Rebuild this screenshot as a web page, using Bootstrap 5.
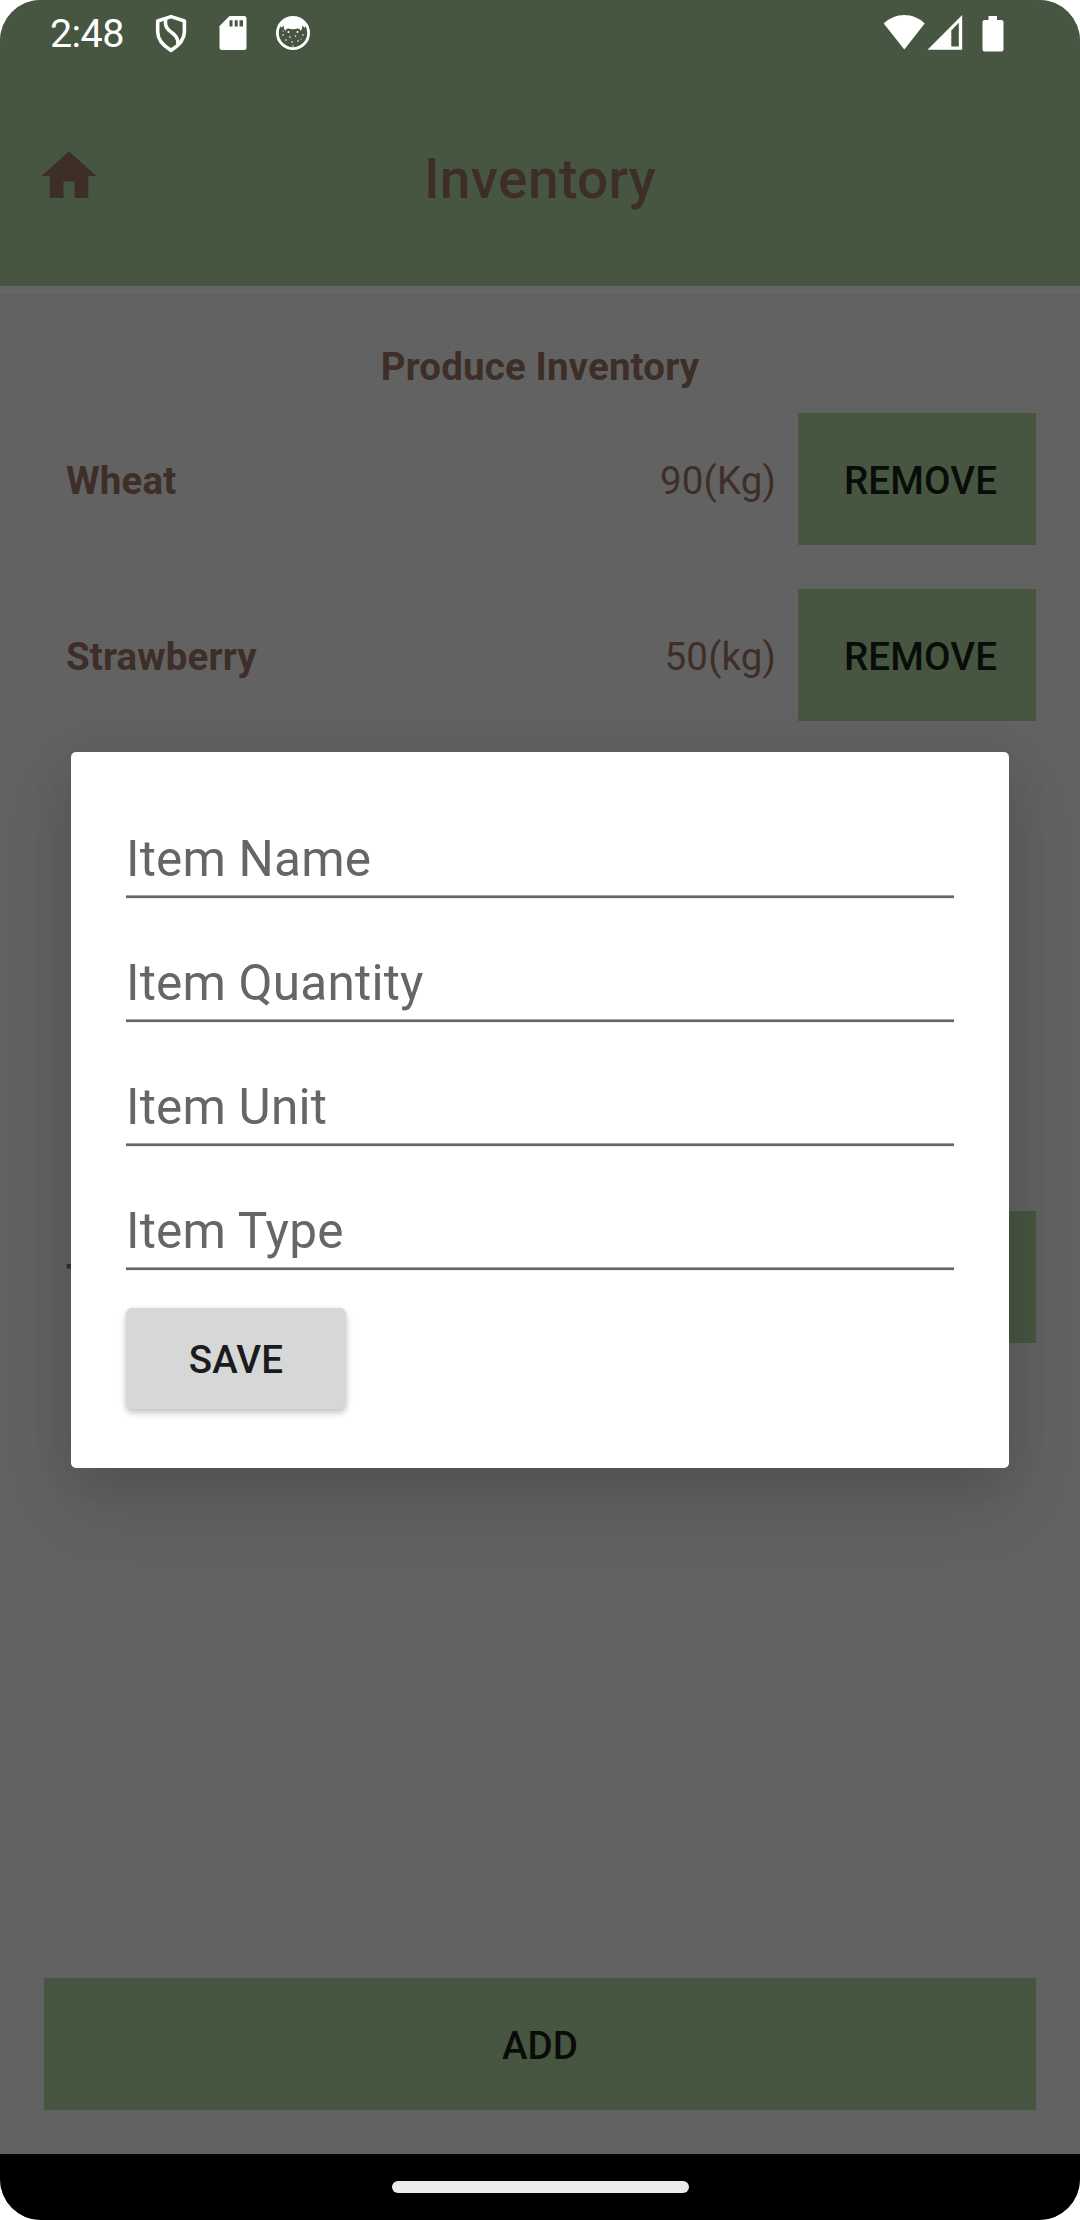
<!DOCTYPE html>
<html lang="en">
<head>
<meta charset="utf-8">
<meta name="viewport" content="width=device-width, initial-scale=1">
<title>Inventory</title>
<link href="https://cdn.jsdelivr.net/npm/bootstrap@5.3.0/dist/css/bootstrap.min.css" rel="stylesheet">
<style>
  body { font-family: Roboto, "Liberation Sans", sans-serif; background: #fff; margin: 0; }
  .phone { width: 1080px; height: 2220px; border-radius: 41px; background: #626262; font-size: 38.5px; line-height: 45px; letter-spacing: .13px; }
  .top-area { height: 286px; background: #475641; }
  .status { height: 66px; padding: 0 76px 0 50px; color: #fff; font-size: 39.5px; letter-spacing: -.6px; }
  .status svg, .home svg { display: block; flex: none; }
  .clock { width: 104px; padding-top: 1px; }
  .ic-card { margin-left: 30.5px; }
  .ic-face { margin-left: 28.8px; }
  .ic-wifi { margin-top: -2px; }
  .ic-cell { margin: -2px 18.8px 0 2.4px; }
  .app-title { color: #3e2e28; font-size: 55px; line-height: 64px; font-weight: 500; height: 220px; padding: 81px 36px 0; letter-spacing: .35px; }
  .app-title .side { width: 66px; height: 66px; margin-top: -4px; }
  .divider { height: 8px; background: #666; }
  .content { padding: 50px 44px 44px; color: #3e2e28; }
  .sect { margin-bottom: 24px; height: 45px; }
  .entry { height: 132px; margin-bottom: 44px; padding-left: 22px; }
  .entry span { padding-top: 2px; }
  .entry .amount { margin-right: 22px; }
  .flat { --bs-btn-color: #0a0c09; --bs-btn-bg: #475641; --bs-btn-border-width: 0; --bs-btn-border-radius: 0; --bs-btn-font-size: 38.5px; --bs-btn-line-height: 45px; --bs-btn-font-weight: 500; height: 132px; letter-spacing: .1px; }
  .rm { width: 238px; padding: 2px 0 0 7px; }
  .add-btn { padding: 2px 0 0; }
  .tools { margin-top: 446px; }
  .tools .entry { margin-bottom: 0; }
  .navpill { width: 297px; height: 12px; border-radius: 6px; background: #ebebeb; }
  .gesture { height: 66px; background: #000; }
  .dlg { --bs-modal-width: 938px; --bs-modal-margin: 0px; }
  .dlg .modal-content { border: 0; border-radius: 5px; height: 716px; padding: 58px 55px 0; box-shadow: 0 34px 70px rgba(0,0,0,.15), 0 0 50px rgba(0,0,0,.06); }
  .field { border: 0; border-bottom: 2px solid #666; border-radius: 0; background: transparent; padding: 12px 0 0; font-size: 49.5px; line-height: 58px; height: 88px; margin-bottom: 36px; box-shadow: inset 0 -1px 0 #a4a4a4, 0 1px 0 #ececec; letter-spacing: .2px; }
  .field::placeholder { color: #666; opacity: 1; }
  .save { --bs-btn-color: #1b1b1b; --bs-btn-bg: #d6d7d7; --bs-btn-border-width: 0; --bs-btn-font-size: 38.5px; --bs-btn-font-weight: 500; width: 220px; height: 101px; border-radius: 6px; margin-top: 2px; padding: 3px 0 0; letter-spacing: .1px; box-shadow: 0 4px 7px rgba(0,0,0,.2), 0 1px 5px rgba(0,0,0,.08); }
</style>
<script src="https://cdn.jsdelivr.net/npm/bootstrap@5.3.0/dist/js/bootstrap.bundle.min.js"></script>
</head>
<body>
<div class="phone d-flex flex-column overflow-hidden position-relative">
  <header class="top-area">
    <div class="status d-flex align-items-center">
      <span class="clock">2:48</span>
      <svg width="34" height="40" viewBox="0 0 34 40" fill="none" stroke="#fff" stroke-width="3.6" stroke-linejoin="round">
        <path d="M17 3.6 30.4 8v11c0 7.500-5.500 13.500-13.400 18.400C9 32.500 3.700 26.500 3.700 19V8z"/>
        <path d="M11.500 5.500v5c0 9.500 13.500 8.500 12.300 20.500"/>
      </svg>
      <svg class="ic-card" width="28" height="36" viewBox="0 0 28 36">
        <path fill="#fff" d="M10.500 1H25a2.500 2.500 0 0 1 2.500 2.500v29A2.500 2.500 0 0 1 25 35H3a2.500 2.500 0 0 1-2.500-2.500V11z"/>
        <path fill="#475641" d="M10.500 5.300h3v6.200h-3zM15.700 5.300h3v6.200h-3zM20.500 5.300H24v6.200h-3.500z"/>
      </svg>
      <svg class="ic-face" width="36" height="36" viewBox="0 0 36 36">
        <circle cx="18" cy="18" r="15.600" fill="none" stroke="#fff" stroke-width="2.800"/>
        <path fill="#fff" d="M5 10C8 4.500 12 2 18 2s10 2.500 13 8l-1.300 2.800-2.700-2.300c.5 3-.2 4.600-2 5.200.3-1.600-1-2.400-2.500-2.200-3 1-6 1-9 0-1.500-.2-2.800.6-2.500 2.200-1.800-.6-2.500-2.200-2-5.200l-2.700 2.300z"/>
        <g fill="#fff"><circle cx="13.500" cy="17" r="1"/><circle cx="22.500" cy="17" r="1"/><circle cx="8" cy="20" r=".8"/><circle cx="28" cy="20" r=".8"/><circle cx="15" cy="22" r=".8"/><circle cx="20.500" cy="21" r=".8"/><circle cx="11" cy="25" r=".8"/><circle cx="17" cy="27" r=".8"/><circle cx="23" cy="26" r=".8"/><circle cx="18" cy="31" r=".7"/><circle cx="26" cy="24" r=".6"/><circle cx="8" cy="16" r=".6"/></g>
      </svg>
      <svg class="ic-wifi ms-auto" width="42" height="36" viewBox="0 0 42 36"><path fill="#fff" d="M.7 9.500C6.500 4 13.500 1 21.300 1S36 4 41.700 9.500L21.300 35.500z"/></svg>
      <svg class="ic-cell" width="36" height="36" viewBox="0 0 36 36"><path fill="#fff" fill-rule="evenodd" d="M.5 35.800 35.200 1v34.800zM24.300 16.500v16h7.500V8.800z"/></svg>
      <svg width="22" height="37" viewBox="0 0 22 37"><path fill="#fff" d="M6.500 1H15v4h4.500A2 2 0 0 1 21.500 7v27.500a2 2 0 0 1-2 2H2.500a2 2 0 0 1-2-2V7a2 2 0 0 1 2-2h4z"/></svg>
    </div>
    <div class="app-title d-flex justify-content-between">
      <div class="side home"><svg width="66" height="66" viewBox="0 0 24 24"><path fill="#3e2e28" d="M10 20v-6h4v6h5v-8h3L12 3 2 12h3v8z"/></svg></div>
      <div>Inventory</div>
      <div class="side"></div>
    </div>
  </header>
  <div class="divider"></div>
  <main class="content flex-grow-1 d-flex flex-column">
    <div class="sect text-center fw-bold">Produce Inventory</div>
    <div class="entry d-flex align-items-center"><span class="fw-bold me-auto">Wheat</span><span class="amount">90(Kg)</span><button class="btn flat rm" type="button">REMOVE</button></div>
    <div class="entry d-flex align-items-center"><span class="fw-bold me-auto">Strawberry</span><span class="amount">50(kg)</span><button class="btn flat rm" type="button">REMOVE</button></div>
    <div class="tools"><div class="entry d-flex align-items-center"><span class="fw-bold me-auto">T</span><button class="btn flat rm" type="button"></button></div></div>
    <button class="btn flat add-btn w-100 mt-auto" type="button">ADD</button>
  </main>
  <footer class="gesture d-flex justify-content-center align-items-center"><div class="navpill"></div></footer>

  <div class="modal dlg show d-block position-absolute" tabindex="-1">
    <div class="modal-dialog modal-dialog-centered h-100">
      <form class="modal-content d-block">
        <input class="field d-block w-100" type="text" placeholder="Item Name">
        <input class="field d-block w-100" type="text" placeholder="Item Quantity">
        <input class="field d-block w-100" type="text" placeholder="Item Unit">
        <input class="field d-block w-100" type="text" placeholder="Item Type">
        <button class="btn save" type="button">SAVE</button>
      </form>
    </div>
  </div>
</div>
</body>
</html>
